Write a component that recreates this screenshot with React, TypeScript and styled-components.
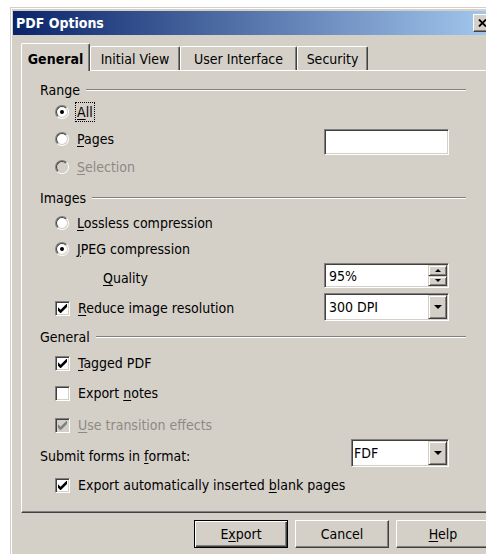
import React from "react";
import styled, { createGlobalStyle } from "styled-components";

// classic 3D face colours
const FACE = "#d4d0c8";
const SHADOW = "#808080";
const DARK = "#404040";
const DISABLED = "#8d8a85";

const GlobalStyle = createGlobalStyle`
  html, body {
    margin: 0;
    padding: 0;
    background: #fff;
    overflow: hidden;
  }
  body {
    font-family: "DejaVu Sans Condensed", "DejaVu Sans", "Liberation Sans", sans-serif;
    font-size: 14px;
    color: #000;
  }
`;

const Window = styled.div`
  box-sizing: border-box;
  width: 489px;
  height: 570px;
  margin: 7px 0 0 10px;
  padding: 3px 0 0 2px;
  border-top: 1px solid ${FACE};
  border-left: 1px solid ${FACE};
  box-shadow: inset 1px 1px #fff;
  background: ${FACE};
  display: flex;
  flex-direction: column;
`;

const TitleBar = styled.div`
  height: 24px;
  padding-left: 3px;
  display: flex;
  align-items: center;
  background: linear-gradient(to right, #0a246a, #a6caf0);
  color: #fff;
  font-weight: bold;
`;

const CloseButton = styled.div`
  box-sizing: border-box;
  width: 19px;
  height: 18px;
  margin-left: auto;
  margin-right: 7px;
  border: 1px solid;
  border-color: #fff ${DARK} ${DARK} #fff;
  box-shadow: inset -1px -1px ${SHADOW};
  background: ${FACE};
  display: flex;
  align-items: center;
  justify-content: center;
`;

const Content = styled.div`
  padding: 8px 9px 0 8px;
  display: flex;
  flex-direction: column;
`;

const TabStrip = styled.div`
  height: 27px;
  display: flex;
  align-items: flex-end;
  position: relative;
  z-index: 1;
`;

const Tab = styled.div<{ $active?: boolean; $width: number }>`
  box-sizing: border-box;
  width: ${(p) => p.$width}px;
  height: ${(p) => (p.$active ? 28 : 24)}px;
  margin-bottom: ${(p) => (p.$active ? -1 : 0)}px;
  padding-top: ${(p) => (p.$active ? 2 : 1)}px;
  border-top: 1px solid #fff;
  border-left: 1px solid #fff;
  border-right: 1px solid ${DARK};
  box-shadow: inset -1px 0 ${SHADOW};
  border-radius: 2px 2px 0 0;
  background: ${FACE};
  display: flex;
  align-items: center;
  justify-content: center;
  white-space: nowrap;
  font-weight: ${(p) => (p.$active ? "bold" : "normal")};
`;

const Panel = styled.div`
  box-sizing: border-box;
  height: 443px;
  padding: 8px 23px 0 18px;
  border-top: 1px solid #fff;
  border-left: 1px solid #fff;
  border-right: 1px solid ${DARK};
  border-bottom: 1px solid ${DARK};
  box-shadow: inset -1px -1px ${SHADOW};
`;

// heading of a group, with the etched rule running to the right
const GroupHeading = styled.div<{ $gap?: number }>`
  height: 22px;
  margin-top: ${(p) => p.$gap ?? 0}px;
  display: flex;
  align-items: center;

  &::after {
    content: "";
    flex: 1;
    height: 0;
    margin-left: 6px;
    border-top: 1px solid ${SHADOW};
    border-bottom: 1px solid #fff;
  }
`;

const Row = styled.div<{ $gap?: number; $indent?: number }>`
  height: 22px;
  margin-top: ${(p) => p.$gap ?? 0}px;
  padding-left: ${(p) => p.$indent ?? 15}px;
  display: flex;
  align-items: center;
  gap: 8px;
`;

const Label = styled.span<{ $disabled?: boolean; $focused?: boolean }>`
  color: ${(p) => (p.$disabled ? DISABLED : "#000")};
  white-space: nowrap;
  outline: ${(p) => (p.$focused ? "1px dotted #000" : "none")};
  outline-offset: 1px;
`;

const Key = styled.span`
  text-decoration: underline;
  text-underline-offset: 2px;
`;

const RadioRing = styled.span`
  box-sizing: border-box;
  width: 14px;
  height: 14px;
  flex: none;
  border-radius: 50%;
  border: 1px solid;
  border-color: ${SHADOW} #fff #fff ${SHADOW};
  display: flex;
`;

const RadioWell = styled.span<{ $disabled?: boolean }>`
  flex: 1;
  border-radius: 50%;
  border: 1px solid;
  border-color: ${DARK} ${FACE} ${FACE} ${DARK};
  background: ${(p) => (p.$disabled ? FACE : "#fff")};
  display: flex;
  align-items: center;
  justify-content: center;
`;

const RadioDot = styled.span`
  width: 4px;
  height: 4px;
  border-radius: 50%;
  background: #000;
`;

const CheckBox = styled.span<{ $disabled?: boolean }>`
  box-sizing: border-box;
  width: 15px;
  height: 15px;
  flex: none;
  border: 1px solid;
  border-color: ${SHADOW} #fff #fff ${SHADOW};
  box-shadow: inset 1px 1px ${DARK}, inset -1px -1px ${FACE};
  background: ${(p) => (p.$disabled ? FACE : "#fff")};
  display: flex;
  align-items: center;
  justify-content: center;
`;

// sunken edit field on the right edge of a row
const Field = styled.div<{ $width: number; $height: number; $shift?: number }>`
  box-sizing: border-box;
  width: ${(p) => p.$width}px;
  height: ${(p) => p.$height}px;
  margin-left: auto;
  margin-right: 17px;
  margin-top: ${(p) => p.$shift ?? 0}px;
  padding: 1px;
  flex: none;
  border: 1px solid;
  border-color: ${SHADOW} #fff #fff ${SHADOW};
  box-shadow: inset 1px 1px ${DARK}, inset -1px -1px ${FACE};
  background: #fff;
  display: flex;
`;

const FieldText = styled.span<{ $pad?: number }>`
  flex: 1;
  padding-left: ${(p) => p.$pad ?? 3}px;
  display: flex;
  align-items: center;
`;

// raised button inside a field (drop-down arrow, spin halves)
const ArrowButton = styled.span<{ $stacked?: boolean }>`
  box-sizing: border-box;
  width: 19px;
  flex: ${(p) => (p.$stacked ? "1" : "none")};
  border: 1px solid;
  border-color: ${FACE} ${DARK} ${DARK} ${FACE};
  box-shadow: inset 1px 1px #fff, inset -1px -1px ${SHADOW};
  background: ${FACE};
  display: flex;
  align-items: center;
  justify-content: center;
`;

const SpinStack = styled.span`
  width: 19px;
  flex: none;
  display: flex;
  flex-direction: column;
`;

const Triangle = styled.span<{ $up?: boolean; $size: number }>`
  width: 0;
  height: 0;
  border-left: ${(p) => p.$size}px solid transparent;
  border-right: ${(p) => p.$size}px solid transparent;
  ${(p) =>
    p.$up
      ? `border-bottom: ${p.$size}px solid #000;`
      : `border-top: ${p.$size}px solid #000;`}
`;

const ButtonRow = styled.div`
  margin-top: 7px;
  display: flex;
  justify-content: flex-end;
  gap: 7px;
`;

const PushButton = styled.div<{ $default?: boolean }>`
  box-sizing: border-box;
  width: 94px;
  height: 28px;
  border: 1px solid;
  border-color: ${(p) => (p.$default ? "#000" : `#fff ${DARK} ${DARK} #fff`)};
  box-shadow: ${(p) =>
    p.$default
      ? `inset 1px 1px #fff, inset -1px -1px ${DARK}, inset -2px -2px ${SHADOW}`
      : `inset -1px -1px ${SHADOW}`};
  background: ${FACE};
  display: flex;
  align-items: center;
  justify-content: center;
`;

const Radio = ({ checked, disabled }: { checked?: boolean; disabled?: boolean }) => (
  <RadioRing>
    <RadioWell $disabled={disabled}>{checked && <RadioDot />}</RadioWell>
  </RadioRing>
);

const Check = ({ checked, disabled }: { checked?: boolean; disabled?: boolean }) => (
  <CheckBox $disabled={disabled}>
    {checked && (
      <svg width="9" height="9" viewBox="0 0 7 7">
        <polygon
          points="0,2.5 2,4.5 7,-0.5 7,2.3 2,7.3 0,5.2"
          fill={disabled ? SHADOW : "#000"}
        />
      </svg>
    )}
  </CheckBox>
);

const ComboBox = ({ value, width, shift, pad }: { value: string; width: number; shift?: number; pad?: number }) => (
  <Field $width={width} $height={28} $shift={shift}>
    <FieldText $pad={pad}>{value}</FieldText>
    <ArrowButton>
      <Triangle $size={4} />
    </ArrowButton>
  </Field>
);

export default function App() {
  return (
    <>
      <GlobalStyle />
      <Window>
        <TitleBar>
          PDF Options
          <CloseButton>
            <svg width="9" height="8" viewBox="0 0 9 8">
              <path d="M1 0.5 L8 7.5 M8 0.5 L1 7.5" stroke="#000" strokeWidth="1.8" />
            </svg>
          </CloseButton>
        </TitleBar>

        <Content>
          <TabStrip>
            <Tab $active $width={69}>
              General
            </Tab>
            <Tab $width={90}>Initial View</Tab>
            <Tab $width={117}>User Interface</Tab>
            <Tab $width={71}>Security</Tab>
          </TabStrip>

          <Panel>
            {/* Range */}
            <GroupHeading>Range</GroupHeading>
            <Row>
              <Radio checked />
              <Label $focused>
                <Key>A</Key>ll
              </Label>
            </Row>
            <Row $gap={5}>
              <Radio />
              <Label>
                <Key>P</Key>ages
              </Label>
              <Field $width={125} $height={26} $shift={6} />
            </Row>
            <Row $gap={6}>
              <Radio disabled />
              <Label $disabled>
                <Key>S</Key>election
              </Label>
            </Row>

            {/* Images */}
            <GroupHeading $gap={9}>Images</GroupHeading>
            <Row $gap={3}>
              <Radio />
              <Label>
                <Key>L</Key>ossless compression
              </Label>
            </Row>
            <Row $gap={4}>
              <Radio checked />
              <Label>
                <Key>J</Key>PEG compression
              </Label>
            </Row>
            <Row $gap={7} $indent={63}>
              <Label>
                <Key>Q</Key>uality
              </Label>
              <Field $width={125} $height={25} $shift={-5}>
                <FieldText>95%</FieldText>
                <SpinStack>
                  <ArrowButton $stacked>
                    <Triangle $up $size={3} />
                  </ArrowButton>
                  <ArrowButton $stacked>
                    <Triangle $size={3} />
                  </ArrowButton>
                </SpinStack>
              </Field>
            </Row>
            <Row $gap={8}>
              <Check checked />
              <Label>
                <Key>R</Key>educe image resolution
              </Label>
              <ComboBox value="300 DPI" width={125} shift={-2} />
            </Row>

            {/* General */}
            <GroupHeading $gap={7}>General</GroupHeading>
            <Row $gap={4}>
              <Check checked />
              <Label>
                <Key>T</Key>agged PDF
              </Label>
            </Row>
            <Row $gap={8}>
              <Check />
              <Label>
                Export <Key>n</Key>otes
              </Label>
            </Row>
            <Row $gap={10}>
              <Check checked disabled />
              <Label $disabled>
                <Key>U</Key>se transition effects
              </Label>
            </Row>
            <Row $gap={9} $indent={0}>
              <Label>
                Submit forms in <Key>f</Key>ormat:
              </Label>
              <ComboBox value="FDF" width={98} shift={-6} pad={1} />
            </Row>
            <Row $gap={7}>
              <Check checked />
              <Label>
                Export automatically inserted <Key>b</Key>lank pages
              </Label>
            </Row>
          </Panel>

          <ButtonRow>
            <PushButton $default>
              <span>
                E<Key>x</Key>port
              </span>
            </PushButton>
            <PushButton>Cancel</PushButton>
            <PushButton>
              <span>
                <Key>H</Key>elp
              </span>
            </PushButton>
          </ButtonRow>
        </Content>
      </Window>
    </>
  );
}
